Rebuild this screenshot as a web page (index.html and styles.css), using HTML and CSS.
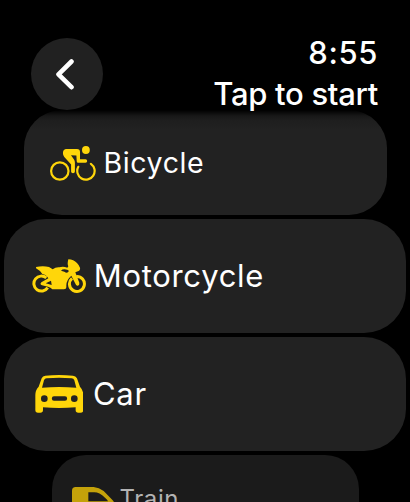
FILE: index.html
```html
<!DOCTYPE html>
<html lang="en">
<head>
    <meta charset="UTF-8">
    <meta name="viewport" content="width=device-width, initial-scale=1.0">
    <title>Tap to start</title>
    <link rel="stylesheet" href="styles.css">
</head>
<body>
    <header class="top-bar">
        <button class="back-button" aria-label="Back">
            <svg width="18" height="31" viewBox="0 0 18 31">
                <path d="M15.5 2.5L2.5 15.3L15.5 28.2"/>
            </svg>
        </button>
        <div class="status">
            <div class="time">8:55</div>
            <h1>Tap to start</h1>
        </div>
    </header>

    <main class="list">
        <!-- Bicycle -->
        <button class="item item-leaving">
            <svg class="icon bicycle-icon" viewBox="0 0 46 35">
                <circle class="line" cx="9.8" cy="25" r="8.7"/>
                <path class="line" d="M40.9 17.8A8.7 8.7 0 1 1 28.3 20.8"/>
                <circle cx="35.9" cy="4" r="3.9"/>
                <path d="M16.3 3H27C29 3 30 4 30 6V13.3H35.5Q37.2 13.3 37.2 15T35.5 16.7H28.2Q26.7 16.7 26.7 15.2L26.4 9.5L21 9.2L24 13.4Q24.9 14.8 24.9 16.5V25.5Q24.9 27.2 23 27.2T21.1 25.5V18.5L14.3 10.9C12.3 8.5 12.3 3 16.3 3Z"/>
            </svg>
            <span>Bicycle</span>
        </button>

        <!-- Motorcycle -->
        <button class="item">
            <svg class="icon motorcycle-icon" viewBox="35 29 164 103">
                <path class="tyre" d="M78 86A22.5 22.5 0 1 0 82 115"/>
                <path class="tyre" d="M155 87A22.5 22.5 0 1 0 168 81.5"/>
                <path fill-rule="evenodd" d="M47 53Q68 49 86 53L97 60Q106 53 117 54Q128 50 141 55L144 51Q140 44 144 30Q160 31 170 41Q175 46 179 55Q181 62 173 66L165 69L177 100Q178 107 173 109Q168 110 166 105L153 79Q138 92 138 108V114Q138 120 131 120H96Q91 114 83 112L65 108Q57 105 63 99L84 87Q78 76 66 74Q60 64 47 57ZM92 94L76 102L94 107ZM122 64Q128 57 143 62Q148 65 143 69Q138 72 132 67Z"/>
            </svg>
            <span>Motorcycle</span>
        </button>

        <!-- Car -->
        <button class="item">
            <svg class="icon car-icon" viewBox="44 29 145 113">
                <path fill-rule="evenodd" d="M75 31Q116 27 158 31Q166 32 170 39L179 64Q189 74 189 90V134Q189 142 180 142H174Q166 142 166 134V126Q116 130 68 126V134Q68 142 60 142H53Q45 142 45 134V90Q45 74 55 64L64 39Q67 32 75 31ZM79 39Q73 39 71 45L65 67Q116 63 168 67L162 45Q160 39 154 39Q116 36 79 39ZM72 90A10 10 0 1 0 72 110A10 10 0 1 0 72 90ZM162 90A10 10 0 1 0 162 110A10 10 0 1 0 162 90ZM101 93A6.5 6.5 0 0 0 101 106H134A6.5 6.5 0 0 0 134 93Z"/>
            </svg>
            <span>Car</span>
        </button>

        <!-- Train -->
        <button class="item item-entering">
            <svg class="icon train-icon" viewBox="96 111 135 105">
                <path fill-rule="evenodd" d="M107 111H161Q177 112 191 123L218 151Q229 164 229 183Q229 216 200 216H96V122Q96 111 107 111ZM145 127V154H204Q203 149 195 143Q178 127 163 127Z"/>
            </svg>
            <span>Train</span>
        </button>
    </main>
</body>
</html>
```

FILE: styles.css
```css
:root {
    --bg-color: #000;
    --card-color: #222;
    --accent: #ffd60a;
    --text-color: #fff;
}

* {
    margin: 0;
    padding: 0;
    box-sizing: border-box;
}

body {
    width: 410px;
    height: 502px;
    overflow: hidden;
    background: var(--bg-color);
    color: var(--text-color);
    font-family: Inter, "Liberation Sans", sans-serif;
}

button {
    border: none;
    color: inherit;
    font: inherit;
}

.top-bar {
    position: relative;
    z-index: 1;
    display: flex;
    justify-content: space-between;
    height: 110px;
    padding: 38px 32px 0 31px;
}

.back-button {
    display: flex;
    align-items: center;
    justify-content: center;
    width: 72px;
    height: 72px;
    padding-right: 5px;
    border-radius: 50%;
    background: #212121;
}

.back-button path {
    fill: none;
    stroke: #fff;
    stroke-width: 4.6;
    stroke-linecap: round;
    stroke-linejoin: round;
}

.status {
    margin-top: -6px;
    text-align: right;
    white-space: nowrap;
}

.time,
.status h1 {
    font-size: 31px;
    font-weight: 500;
    line-height: 41px;
}

.time {
    letter-spacing: 0.6px;
}

.status h1 {
    letter-spacing: -0.3px;
}

.list {
    display: flex;
    flex-direction: column;
    align-items: center;
    gap: 4px;
}

.item {
    display: flex;
    flex-shrink: 0;
    align-items: center;
    width: 402px;
    height: 114px;
    padding-left: 28px;
    border-radius: 42px;
    background: var(--card-color);
    font-size: 31px;
    line-height: 40px;
    letter-spacing: 0.7px;
}

.icon {
    flex-shrink: 0;
    fill: var(--accent);
}

.icon .line,
.icon .tyre {
    fill: none;
    stroke: var(--accent);
}

.icon .line {
    stroke-width: 2.2;
    stroke-linecap: round;
}

.icon .tyre {
    stroke-width: 9;
}

/* cards shrink towards the edges of the list */
.item-leaving {
    width: 363px;
    height: 105px;
    padding: 1px 0 0 26px;
    border-radius: 38px;
    background: linear-gradient(#000, #181818 6px, #1e1e1e 10px, var(--card-color) 20px);
    font-size: 28.5px;
    letter-spacing: 0.6px;
}

.item-entering {
    width: 307px;
    height: 88px;
    padding-left: 20px;
    border-radius: 34px;
    background: #1b1b1b;
    color: #b3b3b3;
    font-size: 24px;
    letter-spacing: 0.6px;
}

.bicycle-icon {
    width: 46px;
    height: 35px;
    margin-right: 8px;
}

.motorcycle-icon {
    width: 54.7px;
    height: 34.3px;
    margin-right: 7px;
}

.car-icon {
    width: 48.3px;
    height: 37.7px;
    margin: 0 10px 0 2.7px;
}

.train-icon {
    width: 45px;
    height: 35px;
    margin: 10px 3px 0 0;
    fill: #c4a20a;
}
```
